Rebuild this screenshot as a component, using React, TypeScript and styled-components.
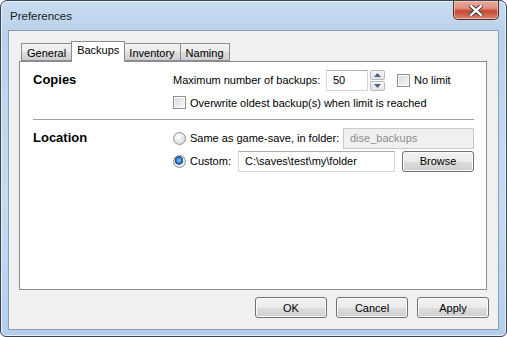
import React from "react";
import styled, { createGlobalStyle } from "styled-components";

const GlobalStyle = createGlobalStyle`
	html, body {
		margin: 0;
		padding: 0;
		background: #fff;
	}
	body {
		font-family: "Liberation Sans", Arial, sans-serif;
		font-size: 11px;
		color: #000;
	}
`;

const App = () => {
	return (
		<>
			<GlobalStyle />
			<Window>
				<TitleBar>
					<Title>Preferences</Title>
					<CloseButton>
						<svg width='14' height='11' viewBox='0 0 14 11'>
							<path
								d='M2 1 L12 10 M12 1 L2 10'
								stroke='#3a2a2a'
								strokeWidth='4.2'
								strokeLinecap='square'
							/>
							<path
								d='M2 1 L12 10 M12 1 L2 10'
								stroke='#fff'
								strokeWidth='2.4'
								strokeLinecap='square'
							/>
						</svg>
					</CloseButton>
				</TitleBar>
				<Client>
					<TabRow>
						<Tab>General</Tab>
						<Tab active>Backups</Tab>
						<Tab>Inventory</Tab>
						<Tab>Naming</Tab>
					</TabRow>
					<Panel>
						<Section>
							<SectionLabel>Copies</SectionLabel>
							<Rows>
								<Row>
									<FieldLabel width={153}>Maximum number of backups:</FieldLabel>
									<TextBox width={42} value='50' readOnly />
									<Spinner>
										<SpinButton>
											<svg width='7' height='4' viewBox='0 0 7 4'>
												<path d='M0 4 L3.5 0 L7 4 Z' fill='#4d6185' />
											</svg>
										</SpinButton>
										<SpinButton>
											<svg width='7' height='4' viewBox='0 0 7 4'>
												<path d='M0 0 L3.5 4 L7 0 Z' fill='#4d6185' />
											</svg>
										</SpinButton>
									</Spinner>
									<Check>
										<Box />
										No limit
									</Check>
								</Row>
								<Row small>
									<Check>
										<Box />
										Overwrite oldest backup(s) when limit is reached
									</Check>
								</Row>
							</Rows>
						</Section>
						<Separator />
						<Section>
							<SectionLabel>Location</SectionLabel>
							<Rows tight>
								<Row>
									<Check>
										<Radio />
										Same as game-save, in folder:
									</Check>
									<TextBox width={131} push disabled value='dise_backups' readOnly />
								</Row>
								<Row>
									<Check>
										<Radio checked />
										Custom:
									</Check>
									<TextBox width={157} push value='C:\saves\test\my\folder' readOnly />
									<Button width={72}>Browse</Button>
								</Row>
							</Rows>
						</Section>
					</Panel>
					<ButtonBar>
						<Button width={72}>OK</Button>
						<Button width={72}>Cancel</Button>
						<Button width={72}>Apply</Button>
					</ButtonBar>
				</Client>
			</Window>
		</>
	);
};

export default App;

const Window = styled.div`
	width: 507px;
	height: 337px;
	box-sizing: border-box;
	border: 1px solid #3b4452;
	border-radius: 7px 7px 6px 6px;
	background: linear-gradient(
		to bottom,
		#c9dcf0 0px,
		#b9d2ec 30px,
		#c5dbf2 200px,
		#b3cfee 337px
	);
	box-shadow: inset 0 0 0 1px #e6f0fa;
	padding: 0 7px 6px 7px;
	display: flex;
	flex-direction: column;
`;
const TitleBar = styled.div`
	height: 29px;
	display: flex;
	justify-content: space-between;
	align-items: flex-start;
`;
const Title = styled.div`
	padding: 9px 0 0 2px;
	font-size: 11.5px;
	color: #1b1b1b;
`;
const CloseButton = styled.div`
	width: 46px;
	height: 19px;
	box-sizing: border-box;
	border: 1px solid #56302c;
	border-top: none;
	border-radius: 0 0 5px 5px;
	background: linear-gradient(
		to bottom,
		#e9aa9c 0%,
		#df8f7e 40%,
		#c54a33 55%,
		#cf6650 80%,
		#d98a75 100%
	);
	box-shadow: inset 0 0 0 1px rgba(255, 220, 210, 0.55);
	display: flex;
	justify-content: center;
	align-items: center;
`;
const Client = styled.div`
	flex: 1;
	border: 1px solid #8e9cae;
	background: #f0f0f0;
	padding: 10px 9px 11px 10px;
	display: flex;
	flex-direction: column;
`;
const TabRow = styled.div`
	height: 21px;
	display: flex;
	align-items: flex-end;
	padding-left: 2px;
	margin-bottom: -1px;
	position: relative;
	z-index: 1;
`;
const Tab = styled.div<{ active?: boolean }>`
	height: ${(p) => (p.active ? "21px" : "18px")};
	box-sizing: border-box;
	padding: ${(p) => (p.active ? "1px 5px 0" : "2px 5px 0")};
	margin: ${(p) => (p.active ? "0 -1px 0 -1px" : "0 0 1px -1px")};
	border: 1px solid #898c95;
	border-bottom: ${(p) => (p.active ? "none" : "1px solid #898c95")};
	background: ${(p) =>
		p.active
			? "#fff"
			: "linear-gradient(to bottom, #f2f2f2 0%, #ebebeb 50%, #dddddd 51%, #cfcfcf 100%)"};
	position: relative;
	z-index: ${(p) => (p.active ? 2 : 1)};
	line-height: 15px;
	&:first-child {
		margin-left: 0;
	}
`;
const Panel = styled.div`
	flex: 1;
	border: 1px solid #898c95;
	background: #fff;
	margin-right: 2px;
	padding: 7px 12px 0 13px;
`;
const Section = styled.div`
	display: grid;
	grid-template-columns: 140px 1fr;
`;
const SectionLabel = styled.div`
	font-size: 13px;
	font-weight: bold;
	line-height: 22px;
`;
const Rows = styled.div<{ tight?: boolean }>`
	display: flex;
	flex-direction: column;
	gap: ${(p) => (p.tight ? "1px" : "3px")};
`;
const Row = styled.div<{ small?: boolean }>`
	height: ${(p) => (p.small ? "17px" : "22px")};
	display: flex;
	align-items: center;
`;
const FieldLabel = styled.span<{ width: number }>`
	width: ${(p) => p.width}px;
	white-space: nowrap;
`;
const TextBox = styled.input<{ width: number; push?: boolean }>`
	width: ${(p) => p.width}px;
	height: 21px;
	box-sizing: border-box;
	margin: 0 0 0 ${(p) => (p.push ? "auto" : "0")};
	padding: 0 0 0 6px;
	border: 1px solid #d5d8de;
	border-top-color: #abadb3;
	font-family: "Liberation Sans", Arial, sans-serif;
	font-size: 11px;
	color: #000;
	background: #fff;
	outline: none;
	&:disabled {
		background: #f0f0f0;
		color: #8d8d8d;
		border-color: #cacaca;
	}
`;
const Spinner = styled.div`
	width: 15px;
	margin-left: 2px;
	display: flex;
	flex-direction: column;
	gap: 1px;
`;
const SpinButton = styled.div`
	height: 10px;
	box-sizing: border-box;
	border: 1px solid #b9b9b9;
	border-radius: 2px;
	background: linear-gradient(to bottom, #f6f6f6, #e3e3e3);
	display: flex;
	justify-content: center;
	align-items: center;
`;
const Check = styled.label`
	display: flex;
	align-items: center;
	gap: 4px;
	white-space: nowrap;
	${Spinner} + & {
		margin-left: 12px;
	}
`;
const Box = styled.span`
	width: 13px;
	height: 13px;
	box-sizing: border-box;
	border: 1px solid #8e8f8f;
	background: linear-gradient(135deg, #d7d7d7 0%, #ececec 60%, #f8f8f8 100%);
	box-shadow: inset 0 0 0 1px #fafafa;
	flex: none;
`;
const Radio = styled.span<{ checked?: boolean }>`
	width: 13px;
	height: 13px;
	box-sizing: border-box;
	border-radius: 50%;
	border: 1px solid #8e8f8f;
	background: ${(p) =>
		p.checked
			? "radial-gradient(circle at 45% 40%, #9fd2ff 0px, #2a7fd4 2.5px, #1d4f8c 4px, #f0f0f0 4.6px, #d8d8d8 100%)"
			: "radial-gradient(circle at 40% 35%, #ffffff 0%, #e4e4e4 55%, #cfcfcf 100%)"};
	flex: none;
`;
const Separator = styled.div`
	height: 1px;
	background: #a0a0a0;
	margin: 8px 0 7px;
`;
const Button = styled.button<{ width: number }>`
	width: ${(p) => p.width}px;
	height: 21px;
	box-sizing: border-box;
	margin-left: 7px;
	padding: 0;
	border: 1px solid #707070;
	border-radius: 3px;
	background: linear-gradient(
		to bottom,
		#f2f2f2 0%,
		#ebebeb 50%,
		#dddddd 51%,
		#cfcfcf 100%
	);
	box-shadow: inset 0 0 0 1px #fcfcfc;
	font-family: "Liberation Sans", Arial, sans-serif;
	font-size: 11px;
	color: #000;
`;
const ButtonBar = styled.div`
	margin-top: 7px;
	display: flex;
	justify-content: flex-end;
	gap: 2px;
`;
